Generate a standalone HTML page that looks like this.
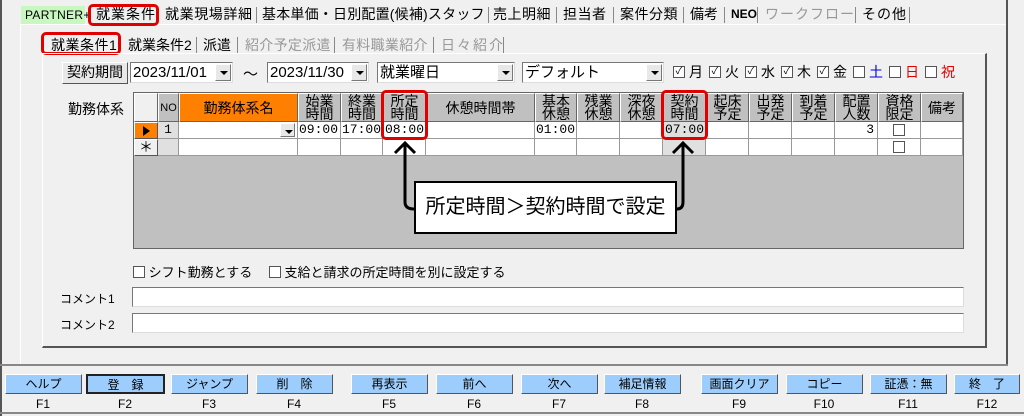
<!DOCTYPE html><html><head><meta charset="utf-8"><style>
*{box-sizing:border-box;margin:0;padding:0}
body{width:1024px;height:416px;background:#f0f0f0;position:relative;overflow:hidden;font-family:"Liberation Sans","Noto Sans CJK JP",sans-serif;font-size:13px;color:#000}
.a{position:absolute;white-space:nowrap}
.tab{position:absolute;top:5px;height:18px;line-height:18px;font-size:14px}
.sep{position:absolute;width:1px;background:#888}
.gray{color:#999}
.hd{position:absolute;top:93px;height:29px;background:#c0c0c0;border:1px solid #fff;border-right-color:#666;border-bottom-color:#666;font-size:14px;line-height:13px;text-align:center;padding-top:1px}
.cell{position:absolute;height:17px;background:#fff;border-right:1px solid #999;border-bottom:1px solid #999;font-size:13px;line-height:16px;font-family:"Liberation Mono","Noto Sans CJK JP",monospace}
.btn{position:absolute;top:374px;height:20px;background:#9dcdfc;border:1px solid #fff;border-right-color:#555;border-bottom-color:#555;text-align:center;font-size:12px;line-height:18px}
.fk{position:absolute;top:397px;font-size:12px;text-align:center;width:78px}
.cb{display:inline-block;width:12px;height:12px;border:1px solid #555;background:#fff;font-size:10px;line-height:10px;text-align:center}
.wk{position:absolute;top:64px;font-size:14px;line-height:16px}
.wk .cb{position:absolute;left:0;top:2px}
.wk span.t{position:absolute;left:16px;top:0}
.combo{position:absolute;height:21px;background:#fff;border:1px solid #777;border-right-color:#ddd;border-bottom-color:#ddd;font-size:15px;line-height:19px;padding-left:2px}
.dd{position:absolute;right:1px;top:1px;width:16px;height:17px;background:#e8e8e8;border:1px solid #fff;border-right-color:#777;border-bottom-color:#777}
.dd:after{content:"";position:absolute;left:4px;top:6px;border-left:4px solid transparent;border-right:4px solid transparent;border-top:4px solid #000}
.red{position:absolute;border:3px solid #e00000;border-radius:5px}
</style></head><body>
<div class="a" style="left:0;top:0;width:2px;height:416px;background:#555"></div>
<div class="a" style="left:20px;top:24px;width:1px;height:340px;background:#fff"></div>
<div class="a" style="left:20px;top:24px;width:986px;height:1px;background:#fff"></div>
<div class="a" style="left:1006px;top:0;width:2px;height:366px;background:#555"></div>
<div class="a" style="left:0;top:364px;width:1008px;height:2px;background:#888"></div>
<div class="a" style="left:0;top:412px;width:1024px;height:2px;background:#888"></div>

<div class="tab" style="left:21px;top:6px;width:64px;background:#c8f8c0;padding-left:4px;font-size:12px;letter-spacing:0.3px">PARTNER+</div>
<div class="tab" style="left:96px;letter-spacing:1px">就業条件</div>
<div class="red" style="left:88px;top:4px;width:71px;height:22px"></div>
<div class="tab" style="left:165px;letter-spacing:0.6px">就業現場詳細</div><div class="sep" style="left:256px;top:7px;height:16px"></div>
<div class="tab" style="left:262px;letter-spacing:0.2px">基本単価・日別配置(候補)スタッフ</div><div class="sep" style="left:488px;top:7px;height:16px"></div>
<div class="tab" style="left:493px;letter-spacing:0.5px">売上明細</div><div class="sep" style="left:556px;top:7px;height:16px"></div>
<div class="tab" style="left:563px;letter-spacing:0.5px">担当者</div><div class="sep" style="left:613px;top:7px;height:16px"></div>
<div class="tab" style="left:620px;letter-spacing:0.5px">案件分類</div><div class="sep" style="left:683px;top:7px;height:16px"></div>
<div class="tab" style="left:690px">備考</div><div class="sep" style="left:724px;top:7px;height:16px"></div>
<div class="tab" style="left:731px;font-size:12px;font-weight:bold">NEO</div><div class="sep" style="left:757px;top:7px;height:16px"></div>
<div class="tab gray" style="left:765px;letter-spacing:1px">ワークフロー</div><div class="sep" style="left:855px;top:7px;height:16px"></div>
<div class="tab" style="left:862px;letter-spacing:1px">その他</div><div class="sep" style="left:909px;top:7px;height:16px"></div>

<div class="tab" style="left:51px;top:36px;letter-spacing:0.5px">就業条件1</div>
<div class="red" style="left:41px;top:32px;width:80px;height:23px"></div>
<div class="tab" style="left:128px;top:36px">就業条件2</div><div class="sep" style="left:196px;top:37px;height:16px"></div>
<div class="tab" style="left:203px;top:36px">派遣</div><div class="sep" style="left:237px;top:37px;height:16px"></div>
<div class="tab gray" style="left:245px;top:36px;letter-spacing:0.3px">紹介予定派遣</div><div class="sep" style="left:334px;top:37px;height:16px"></div>
<div class="tab gray" style="left:342px;top:36px;letter-spacing:0.3px">有料職業紹介</div><div class="sep" style="left:433px;top:37px;height:16px"></div>
<div class="tab gray" style="left:441px;top:36px;letter-spacing:2px">日々紹介</div><div class="sep" style="left:503px;top:37px;height:16px"></div>

<div class="a" style="left:42px;top:53px;width:945px;height:295px;border:1px solid #fff;border-right:2px solid #555;border-bottom:2px solid #555"></div>

<div class="a" style="left:62px;top:62px;width:66px;height:22px;background:#e8e8e8;border:1px solid #fff;border-right-color:#555;border-bottom-color:#555;text-align:center;line-height:19px;font-size:14px">契約期間</div>
<div class="combo" style="left:130px;top:62px;width:103px">2023/11/01<div class="dd"></div></div>
<div class="a" style="left:243px;top:63px;font-size:15px">〜</div>
<div class="combo" style="left:267px;top:62px;width:102px">2023/11/30<div class="dd"></div></div>
<div class="combo" style="left:377px;top:62px;width:138px">就業曜日<div class="dd"></div></div>
<div class="combo" style="left:522px;top:62px;width:142px">デフォルト<div class="dd"></div></div>
<div class="wk" style="left:673px"><span class="cb">✓</span><span class="t">月</span></div>
<div class="wk" style="left:709px"><span class="cb">✓</span><span class="t">火</span></div>
<div class="wk" style="left:745px"><span class="cb">✓</span><span class="t">水</span></div>
<div class="wk" style="left:781px"><span class="cb">✓</span><span class="t">木</span></div>
<div class="wk" style="left:817px"><span class="cb">✓</span><span class="t">金</span></div>
<div class="wk" style="left:853px"><span class="cb"></span><span class="t" style="color:#0000e0">土</span></div>
<div class="wk" style="left:889px"><span class="cb"></span><span class="t" style="color:#e00000">日</span></div>
<div class="wk" style="left:925px"><span class="cb"></span><span class="t" style="color:#e00000">祝</span></div>

<div class="a" style="left:68px;top:99px;font-size:14px">勤務体系</div>

<div class="a" style="left:133px;top:92px;width:831px;height:157px;background:#c0c0c0;border:1px solid #666"></div>
<div class="hd" style="left:134px;width:24px;background:#f0f0f0"></div>
<div class="hd" style="left:158px;width:21px;line-height:27px;font-size:11px">NO</div>
<div class="hd" style="left:179px;width:119px;background:#ff8000;line-height:27px;font-size:14px">勤務体系名</div>
<div class="hd" style="left:298px;width:43px">始業<br>時間</div>
<div class="hd" style="left:341px;width:42px">終業<br>時間</div>
<div class="hd" style="left:383px;width:43px">所定<br>時間</div>
<div class="hd" style="left:426px;width:109px;line-height:27px">休憩時間帯</div>
<div class="hd" style="left:535px;width:42px">基本<br>休憩</div>
<div class="hd" style="left:577px;width:43px">残業<br>休憩</div>
<div class="hd" style="left:620px;width:43px">深夜<br>休憩</div>
<div class="hd" style="left:663px;width:43px">契約<br>時間</div>
<div class="hd" style="left:706px;width:43px">起床<br>予定</div>
<div class="hd" style="left:749px;width:43px">出発<br>予定</div>
<div class="hd" style="left:792px;width:43px">到着<br>予定</div>
<div class="hd" style="left:835px;width:43px">配置<br>人数</div>
<div class="hd" style="left:878px;width:43px">資格<br>限定</div>
<div class="hd" style="left:921px;width:42px;line-height:27px">備考</div>

<div class="a" style="left:134px;top:122px;width:24px;height:17px;background:#ff8000;border:1px solid #fff;border-right-color:#555;border-bottom-color:#555"><div style="position:absolute;left:8px;top:3px;border-top:5px solid transparent;border-bottom:5px solid transparent;border-left:7px solid #000"></div></div>
<div class="a" style="left:134px;top:139px;width:24px;height:17px;background:#f0f0f0;border:1px solid #fff;border-right-color:#555;border-bottom-color:#555;text-align:center;font-size:14px;line-height:15px">＊</div>
<div class="cell" style="left:158px;top:122px;width:21px;background:#e0e0e0;text-align:center">1</div>
<div class="cell" style="left:158px;top:139px;width:21px;background:#e0e0e0"></div>
<div class="cell" style="left:179px;top:122px;width:119px"><div class="dd" style="top:1px;right:2px;height:14px;width:15px"></div></div>
<div class="cell" style="left:179px;top:139px;width:119px"></div>
<div class="cell" style="left:298px;top:122px;width:43px;padding-left:1px">09:00</div>
<div class="cell" style="left:341px;top:122px;width:42px;padding-left:1px">17:00</div>
<div class="cell" style="left:383px;top:122px;width:43px;padding-left:2px">08:00</div>
<div class="cell" style="left:426px;top:122px;width:109px"></div>
<div class="cell" style="left:535px;top:122px;width:42px;padding-left:1px">01:00</div>
<div class="cell" style="left:577px;top:122px;width:43px"></div>
<div class="cell" style="left:620px;top:122px;width:43px"></div>
<div class="cell" style="left:663px;top:122px;width:43px;background:#e0e0e0;padding-left:2px">07:00</div>
<div class="cell" style="left:706px;top:122px;width:43px"></div>
<div class="cell" style="left:749px;top:122px;width:43px"></div>
<div class="cell" style="left:792px;top:122px;width:43px"></div>
<div class="cell" style="left:835px;top:122px;width:43px;text-align:right;padding-right:3px">3</div>
<div class="cell" style="left:878px;top:122px;width:43px"><span class="cb" style="position:absolute;left:15px;top:2px"></span></div>
<div class="cell" style="left:921px;top:122px;width:42px"></div>
<div class="cell" style="left:298px;top:139px;width:43px"></div>
<div class="cell" style="left:341px;top:139px;width:42px"></div>
<div class="cell" style="left:383px;top:139px;width:43px"></div>
<div class="cell" style="left:426px;top:139px;width:109px"></div>
<div class="cell" style="left:535px;top:139px;width:42px"></div>
<div class="cell" style="left:577px;top:139px;width:43px"></div>
<div class="cell" style="left:620px;top:139px;width:43px"></div>
<div class="cell" style="left:663px;top:139px;width:43px;background:#e0e0e0"></div>
<div class="cell" style="left:706px;top:139px;width:43px"></div>
<div class="cell" style="left:749px;top:139px;width:43px"></div>
<div class="cell" style="left:792px;top:139px;width:43px"></div>
<div class="cell" style="left:835px;top:139px;width:43px"></div>
<div class="cell" style="left:878px;top:139px;width:43px"><span class="cb" style="position:absolute;left:15px;top:2px"></span></div>
<div class="cell" style="left:921px;top:139px;width:42px"></div>

<div class="red" style="left:381px;top:90px;width:47px;height:50px"></div>
<div class="red" style="left:661px;top:90px;width:47px;height:50px"></div>

<svg class="a" style="left:0;top:0" width="1024" height="416">
<g fill="none" stroke="#000" stroke-width="3">
<path d="M395 153 L405 143 L415 153"/><path d="M405 144 V202 Q405 209 414 209"/>
<path d="M673 153 L683 143 L693 153"/><path d="M683 144 V202 Q683 209 677 209"/>
</g></svg>
<div class="a" style="left:414px;top:181px;width:263px;height:53px;background:#fff;border:2px solid #000;font-size:20px;line-height:49px;text-align:center">所定時間＞契約時間で設定</div>

<div class="a" style="left:133px;top:262px;font-size:13px"><span class="cb" style="vertical-align:-1px"></span> シフト勤務とする　 <span class="cb" style="vertical-align:-1px"></span> 支給と請求の所定時間を別に設定する</div>
<div class="a" style="left:60px;top:290px;font-size:12px">コメント1</div>
<div class="a" style="left:132px;top:287px;width:832px;height:20px;background:#fff;border:1px solid #777;border-right-color:#ddd;border-bottom-color:#ddd"></div>
<div class="a" style="left:60px;top:316px;font-size:12px">コメント2</div>
<div class="a" style="left:132px;top:313px;width:832px;height:20px;background:#fff;border:1px solid #777;border-right-color:#ddd;border-bottom-color:#ddd"></div>

<div class="btn" style="left:5px;width:77px">ヘルプ</div><div class="fk" style="left:4px">F1</div>
<div class="btn" style="left:86px;width:79px;border:2px solid #222">登　録</div><div class="fk" style="left:86px">F2</div>
<div class="btn" style="left:171px;width:77px">ジャンプ</div><div class="fk" style="left:170px">F3</div>
<div class="btn" style="left:256px;width:77px">削　除</div><div class="fk" style="left:255px">F4</div>
<div class="btn" style="left:351px;width:77px">再表示</div><div class="fk" style="left:350px">F5</div>
<div class="btn" style="left:436px;width:77px">前へ</div><div class="fk" style="left:435px">F6</div>
<div class="btn" style="left:521px;width:77px">次へ</div><div class="fk" style="left:520px">F7</div>
<div class="btn" style="left:604px;width:77px">補足情報</div><div class="fk" style="left:603px">F8</div>
<div class="btn" style="left:701px;width:77px">画面クリア</div><div class="fk" style="left:700px">F9</div>
<div class="btn" style="left:786px;width:77px">コピー</div><div class="fk" style="left:785px">F10</div>
<div class="btn" style="left:870px;width:77px">証憑：無</div><div class="fk" style="left:869px">F11</div>
<div class="btn" style="left:954px;width:66px">終　了</div><div class="fk" style="left:948px">F12</div>
</body></html>
